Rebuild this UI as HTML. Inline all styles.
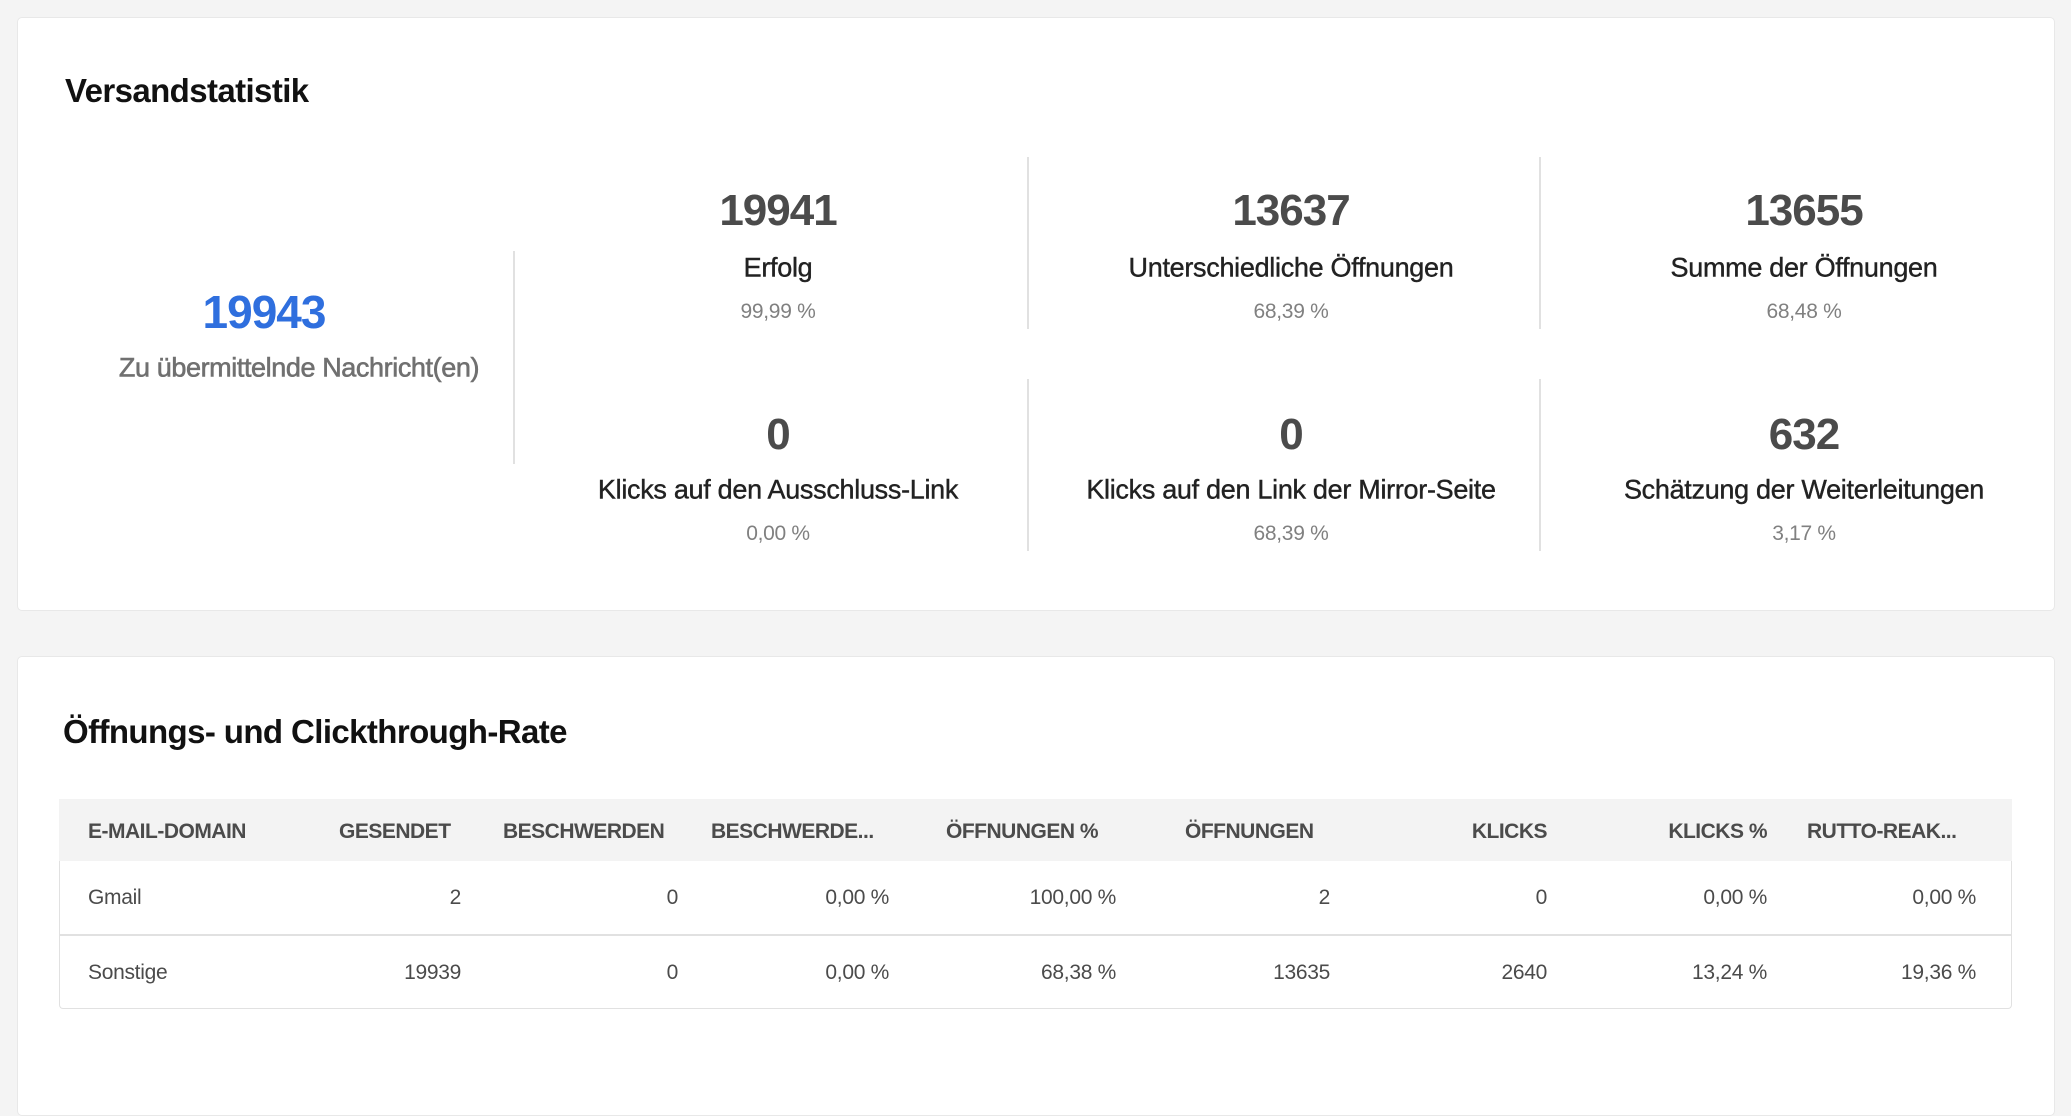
<!DOCTYPE html>
<html><head><meta charset="utf-8"><style>
*{margin:0;padding:0;box-sizing:border-box}
body{width:2071px;height:1056px;background:#f4f4f4;font-family:"Liberation Sans",sans-serif;position:relative;overflow:hidden}
.card{position:absolute;left:17px;width:2038px;background:#fff;border:1px solid #e8e8e8;border-radius:5px}
.a{position:absolute;white-space:nowrap}
.c{position:absolute;text-align:center;white-space:nowrap;transform:translateY(-50%)}
.num{font-size:44px;font-weight:bold;color:#4b4b4b;letter-spacing:-1px}
.lbl{font-size:27px;color:#222;letter-spacing:-0.3px;-webkit-text-stroke:0.4px #222}
.pct{font-size:21px;color:#808080;letter-spacing:-0.3px}
.vd{position:absolute;width:2px;background:#e1e1e1}
.th{position:absolute;font-size:21px;font-weight:bold;color:#4b4b4b;transform:translateY(-50%);white-space:nowrap;letter-spacing:-0.5px}
.td{position:absolute;font-size:21px;color:#4b4b4b;transform:translateY(-50%);white-space:nowrap;letter-spacing:-0.3px}
.r{text-align:right}
.t{position:absolute;white-space:nowrap;font-size:33px;color:#111;font-weight:bold;letter-spacing:-0.6px}
</style></head><body>
<div class="card" style="top:17px;height:594px"></div>
<div class="card" style="top:656px;height:460px"></div>

<div class="t" style="left:65px;top:72px">Versandstatistik</div>

<div class="c" style="left:64px;width:400px;top:312px;font-size:46px;font-weight:bold;color:#2f6fde;letter-spacing:-1px">19943</div>
<div class="c" style="left:64px;width:470px;top:368px;font-size:27px;color:#707070;letter-spacing:-0.4px;-webkit-text-stroke:0.6px #707070">Zu übermittelnde Nachricht(en)</div>
<div class="vd" style="left:513px;top:251px;height:213px"></div>

<div class="vd" style="left:1027px;top:157px;height:172px"></div>
<div class="vd" style="left:1539px;top:157px;height:172px"></div>
<div class="vd" style="left:1027px;top:379px;height:172px"></div>
<div class="vd" style="left:1539px;top:379px;height:172px"></div>

<div class="c num" style="left:528px;width:500px;top:211px">19941</div>
<div class="c lbl" style="left:528px;width:500px;top:268px">Erfolg</div>
<div class="c pct" style="left:528px;width:500px;top:312px">99,99 %</div>

<div class="c num" style="left:1041px;width:500px;top:211px">13637</div>
<div class="c lbl" style="left:1041px;width:500px;top:268px">Unterschiedliche Öffnungen</div>
<div class="c pct" style="left:1041px;width:500px;top:312px">68,39 %</div>

<div class="c num" style="left:1554px;width:500px;top:211px">13655</div>
<div class="c lbl" style="left:1554px;width:500px;top:268px">Summe der Öffnungen</div>
<div class="c pct" style="left:1554px;width:500px;top:312px">68,48 %</div>

<div class="c num" style="left:528px;width:500px;top:435px">0</div>
<div class="c lbl" style="left:528px;width:500px;top:490px">Klicks auf den Ausschluss-Link</div>
<div class="c pct" style="left:528px;width:500px;top:534px">0,00 %</div>

<div class="c num" style="left:1041px;width:500px;top:435px">0</div>
<div class="c lbl" style="left:1041px;width:500px;top:490px">Klicks auf den Link der Mirror-Seite</div>
<div class="c pct" style="left:1041px;width:500px;top:534px">68,39 %</div>

<div class="c num" style="left:1554px;width:500px;top:435px">632</div>
<div class="c lbl" style="left:1554px;width:500px;top:490px">Schätzung der Weiterleitungen</div>
<div class="c pct" style="left:1554px;width:500px;top:534px">3,17 %</div>

<div class="t" style="left:63px;top:713px">Öffnungs- und Clickthrough-Rate</div>

<div class="a" style="left:59px;top:799px;width:1953px;height:62px;background:#f3f3f3"></div>
<div class="a" style="left:59px;top:861px;width:1953px;height:148px;border:1px solid #e1e1e1;border-top:none;border-radius:0 0 4px 4px"></div>
<div class="a" style="left:59px;top:934px;width:1953px;height:2px;background:#e1e1e1"></div>

<div class="th" style="left:88px;top:832px">E-MAIL-DOMAIN</div>
<div class="th" style="left:339px;top:832px">GESENDET</div>
<div class="th" style="left:503px;top:832px">BESCHWERDEN</div>
<div class="th" style="left:711px;top:832px">BESCHWERDE...</div>
<div class="th" style="left:946px;top:832px">ÖFFNUNGEN %</div>
<div class="th" style="left:1185px;top:832px">ÖFFNUNGEN</div>
<div class="th r" style="right:524px;top:832px">KLICKS</div>
<div class="th r" style="right:304px;top:832px">KLICKS %</div>
<div class="th" style="left:1807px;top:832px">RUTTO-REAK...</div>

<div class="td" style="left:88px;top:898px">Gmail</div>
<div class="td r" style="right:1610px;top:898px">2</div>
<div class="td r" style="right:1393px;top:898px">0</div>
<div class="td r" style="right:1182px;top:898px">0,00 %</div>
<div class="td r" style="right:955px;top:898px">100,00 %</div>
<div class="td r" style="right:741px;top:898px">2</div>
<div class="td r" style="right:524px;top:898px">0</div>
<div class="td r" style="right:304px;top:898px">0,00 %</div>
<div class="td r" style="right:95px;top:898px">0,00 %</div>

<div class="td" style="left:88px;top:973px">Sonstige</div>
<div class="td r" style="right:1610px;top:973px">19939</div>
<div class="td r" style="right:1393px;top:973px">0</div>
<div class="td r" style="right:1182px;top:973px">0,00 %</div>
<div class="td r" style="right:955px;top:973px">68,38 %</div>
<div class="td r" style="right:741px;top:973px">13635</div>
<div class="td r" style="right:524px;top:973px">2640</div>
<div class="td r" style="right:304px;top:973px">13,24 %</div>
<div class="td r" style="right:95px;top:973px">19,36 %</div>
</body></html>
